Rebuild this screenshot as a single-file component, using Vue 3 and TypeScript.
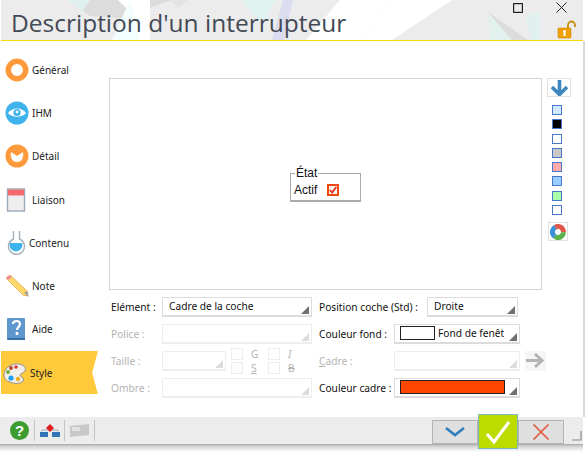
<script setup lang="ts">
interface Nav { label: string; icon: string; active?: boolean }
const nav: Nav[] = [
  { label: 'Général', icon: 'ring' },
  { label: 'IHM', icon: 'eye' },
  { label: 'Détail', icon: 'detail' },
  { label: 'Liaison', icon: 'cal' },
  { label: 'Contenu', icon: 'flask' },
  { label: 'Note', icon: 'pencil' },
  { label: 'Aide', icon: 'book' },
  { label: 'Style', icon: 'palette', active: true },
]
const swatches = ['#cfe8fc', '#000000', '#ffffff', '#c8c8c8', '#ffaaaa', '#99ccff', '#aaffaa', '#ffffff']
</script>

<template>
  <div class="win">
    <header class="head">
      <svg class="head-bg" width="586" height="40" viewBox="0 0 586 40">
        <polygon points="70,0 172,0 120,18 90,16" fill="#dcdcdc" />
        <polygon points="68,0 90,0 82,12" fill="#dff0ee" />
        <polygon points="118,0 150,0 150,40 112,40 130,12" fill="#ffffff" />
        <polygon points="130,0 140,40 112,40" fill="#f4fdfd" />
        <polygon points="170,0 188,0 178,8" fill="#e3e3e3" />
        <polygon points="242,0 276,0 262,26" fill="#dff2f0" />
        <polygon points="283,0 293,0 284,40 272,40" fill="#dcdcf0" />
        <polygon points="340,0 392,0 360,40 306,40" fill="#ffffff" />
        <polygon points="392,0 452,0 392,40 360,40" fill="#ffffff" />
        <polygon points="488,12 528,40 494,40" fill="#dcdcdc" />
        <polygon points="488,12 512,40 490,40" fill="#e2f0ee" />
        <polygon points="525,16 540,10 540,40 532,40" fill="#e0f0ef" />
      </svg>
      <h1 class="title">Description d'un interrupteur</h1>
      <div class="win-btns">
        <span class="max"></span>
        <svg width="11" height="11" viewBox="0 0 11 11"><path d="M.5.5l10 10M10.500.5l-10 10" stroke="#222" stroke-width="1" fill="none" /></svg>
      </div>
      <svg class="lock" width="20" height="19" viewBox="0 0 20 19">
        <path d="M11 9V5a3.500 3.500 0 0 1 7 0v2" fill="none" stroke="#c98f10" stroke-width="1.800" />
        <rect x="1" y="8" width="13" height="10" rx="1" fill="#f0a000" stroke="#c98a00" stroke-width=".6" />
        <path d="M7.500 10a1.500 1.500 0 0 1 1 2.600V16h-2v-3.400a1.500 1.500 0 0 1 1-2.600z" fill="#fff" />
      </svg>
    </header>

    <div class="body">
      <nav class="nav">
        <div v-for="n in nav" :key="n.label" class="nav-item" :class="{ active: n.active, contenu: n.icon === 'flask' }">
          <svg class="nav-icon" width="24" height="24" viewBox="0 0 24 24">
            <template v-if="n.icon === 'ring'">
              <circle cx="12" cy="12" r="8.700" fill="#fff" stroke="#ff9a3c" stroke-width="5.500" />
            </template>
            <template v-else-if="n.icon === 'eye'">
              <circle cx="12" cy="12" r="11.500" fill="#3fb4ec" />
              <path d="M3 12c4-6 14-6 18 0-4 5-14 5-18 0z" fill="#fff" />
              <circle cx="12" cy="11.500" r="3.600" fill="#3fb4ec" />
              <circle cx="12" cy="11" r="1.400" fill="#fff" />
            </template>
            <template v-else-if="n.icon === 'detail'">
              <circle cx="12" cy="12" r="11.500" fill="#ff9a3c" />
              <path d="M6 8l6 4 6-4c1 5-1 10-6 10S5 13 6 8z" fill="#fff" />
            </template>
            <template v-else-if="n.icon === 'cal'">
              <rect x="2.500" y="1" width="17" height="22" fill="#eeeeee" stroke="#9aa9b8" stroke-width="1.400" />
              <rect x="3" y="1.500" width="16" height="6" fill="#f36b6b" />
            </template>
            <template v-else-if="n.icon === 'flask'">
              <path d="M8.500 0v8a8 8 0 1 0 6 0V0" fill="#fff" stroke="#a8b0b8" stroke-width="1.400" />
              <path d="M4.800 12h12.400a6.500 6.500 0 1 1-12.400 0z" fill="#3fb4ec" />
            </template>
            <template v-else-if="n.icon === 'pencil'">
              <path d="M5 1l18 17-1 4-4-1L1 4z" fill="#ffd76a" stroke="#e8a838" stroke-width=".8" />
              <path d="M1 4l4-3 2 2-4 3z" fill="#ee8f9c" />
              <path d="M19 19l3-2 2 6z" fill="#a0a0a0" />
            </template>
            <template v-else-if="n.icon === 'book'">
              <rect x="2" y="1" width="18" height="22" rx="1" fill="#5f97cf" />
              <path d="M2 21h18v2H3z" fill="#3b6fa8" />
              <path d="M8 7c0-4 7-4 7 0 0 3-3 3-3 6" fill="none" stroke="#fff" stroke-width="2.200" />
              <rect x="10.700" y="15" width="2.600" height="3" fill="#fff" />
            </template>
            <template v-else>
              <path d="M1 14C1 6 10 2 16 3c6 1 8 5 5 8-2 2-3 1-4 3 1 3 5 3 3 6-2 3-9 3-13 1-4-1-6-4-6-7z" fill="#f1efe8" stroke="#8a8a8a" stroke-width=".9" />
              <circle cx="8" cy="7" r="2" fill="#b9502f" />
              <circle cx="5" cy="11" r="2" fill="#6fb04a" />
              <circle cx="13" cy="6" r="1.800" fill="#d33" />
              <circle cx="8" cy="17" r="2.600" fill="#1f9fef" />
              <circle cx="15" cy="18" r="2.200" fill="#f0b020" />
            </template>
          </svg>
          <span class="nav-label">{{ n.label }}</span>
        </div>
      </nav>

      <main class="content">
        <section class="top">
          <div class="preview">
            <fieldset class="etat">
              <legend>État</legend>
              <label class="actif">Actif <span class="check"><svg width="8" height="8" viewBox="0 0 8 8"><path d="M.8 4l2.300 2.500L7.300 1" fill="none" stroke="#e0301e" stroke-width="1.800" /></svg></span></label>
            </fieldset>
          </div>
          <aside class="tools">
            <button class="arrow-btn">
              <svg width="19" height="17" viewBox="0 0 19 17"><path d="M9.500 1v13M2 8l7.500 7.500L17 8" fill="none" stroke="#3e86bf" stroke-width="3.600" /></svg>
            </button>
            <div class="swatches">
              <span v-for="(c, i) in swatches" :key="i" class="swatch" :style="{ background: c }"></span>
            </div>
            <button class="wheel-btn">
              <svg width="16" height="16" viewBox="0 0 16 16">
                <g transform="rotate(-120 8 8)">
                  <circle cx="8" cy="8" r="5.500" fill="none" stroke="#e2574c" stroke-width="5" stroke-dasharray="11.520 23.040" />
                  <circle cx="8" cy="8" r="5.500" fill="none" stroke="#59b34a" stroke-width="5" stroke-dasharray="11.520 23.040" stroke-dashoffset="-11.520" />
                  <circle cx="8" cy="8" r="5.500" fill="none" stroke="#3a8fd8" stroke-width="5" stroke-dasharray="11.520 23.040" stroke-dashoffset="-23.040" />
                </g>
                <circle cx="8" cy="8" r="2.400" fill="#fff" />
              </svg>
            </button>
          </aside>
        </section>

        <section class="form">
          <div class="col-l">
            <div class="row"><span class="lab l1">Elément :</span><div class="sel"><span>Cadre de la coche</span><i class="tri"></i></div></div>
            <div class="row dis"><span class="lab l1">Police :</span><div class="sel"><i class="tri"></i></div></div>
            <div class="row dis">
              <span class="lab l1">Taille :</span>
              <div class="sel small"><i class="tri"></i></div>
              <div class="styles">
                <span class="cb"></span><span class="st">G</span><span class="cb"></span><span class="st it">I</span>
                <span class="cb"></span><span class="st un">S</span><span class="cb"></span><span class="st strike">B</span>
              </div>
            </div>
            <div class="row dis"><span class="lab l1">Ombre :</span><div class="sel"><i class="tri"></i></div></div>
          </div>
          <div class="col-r">
            <div class="row"><span class="lab l3">Position coche (Std) :</span><div class="sel pos"><span>Droite</span><i class="tri"></i></div></div>
            <div class="row"><span class="lab l2">Couleur fond :</span><div class="sel col"><span class="chip white"></span><span class="fond">Fond de fenêtre</span><i class="tri"></i></div></div>
            <div class="row dis"><span class="lab l2"><u>C</u>adre :</span><div class="sel col"><i class="tri"></i></div>
              <span class="go"><svg width="21" height="17" viewBox="0 0 21 17"><path d="M1 8.500h16M10 2l7 6.500-7 6.500" fill="none" stroke="#b4b4b4" stroke-width="3" /></svg></span>
            </div>
            <div class="row"><span class="lab l2">Couleur cadre :</span><div class="sel col"><span class="chip red"></span><i class="tri"></i></div></div>
          </div>
        </section>
      </main>
      <div class="edge"></div>
    </div>

    <footer class="foot">
      <div class="foot-tools">
        <span class="ft">
          <svg width="19" height="19" viewBox="0 0 19 19"><circle cx="9.500" cy="9.500" r="9.500" fill="#3c9c30" /><text x="9.500" y="14.500" text-anchor="middle" class="q">?</text></svg>
        </span>
        <span class="ft">
          <svg width="20" height="14" viewBox="0 0 20 14"><path d="M2 7.500V6h16v1.500" fill="none" stroke="#9ab" stroke-width="1" /><rect x="0" y="8" width="8" height="5" fill="#2f74b5" /><rect x="12" y="8" width="8" height="5" fill="#2f74b5" /><path d="M10 0l4 4-4 4-4-4z" fill="#e02020" /></svg>
        </span>
        <span class="ft">
          <svg width="19" height="13" viewBox="0 0 19 13"><path d="M0 2l19-2v11l-19 2z" fill="#c8c8c8" /><path d="M2 3h8v4H2z" fill="#e2e2e2" /></svg>
        </span>
      </div>
      <div class="actions">
        <button class="act">
          <svg width="22" height="11" viewBox="0 0 22 11"><path d="M2 2l9 7 9-7" fill="none" stroke="#2f7fbe" stroke-width="2.600" /></svg>
        </button>
        <button class="ok">
          <svg width="26" height="24" viewBox="0 0 26 24"><path d="M2 14l7 8L24 2" fill="none" stroke="#fff" stroke-width="3" /></svg>
        </button>
        <button class="act">
          <svg width="18" height="18" viewBox="0 0 18 18"><path d="M1.500 1.500l15 15M16.500 1.500l-15 15" fill="none" stroke="#e2583e" stroke-width="1.600" /></svg>
        </button>
      </div>
      <svg class="grip" width="11" height="11" viewBox="0 0 11 11"><path d="M10 1v9H1" fill="none" stroke="#8a8a8a" stroke-width="1.200" /></svg>
    </footer>
    <div class="shadow"></div>
  </div>
</template>

<style>
html, body { margin: 0; background: #fff; }
</style>

<style scoped>
.win {
  width: 586px;
  height: 452px;
  display: flex;
  flex-direction: column;
  background: #fff;
  overflow: hidden;
  font-family: "Noto Sans", sans-serif;
  font-size: 10.200px;
  color: #111;
}
.head {
  position: relative;
  height: 40px;
  flex: none;
  margin: 0 3px 0 1px;
  background: #ececec;
  border-bottom: 1px solid #ffd800;
  overflow: hidden;
}
.head-bg { position: absolute; left: -1px; top: 0; }
.title {
  position: relative;
  margin: 0;
  padding: 6px 0 0 10px;
  font: 400 24.500px/34px "Open Sans", sans-serif;
  color: #444a55;
  white-space: nowrap;
}
.win-btns {
  position: absolute;
  top: 2px;
  right: 16px;
  display: flex;
  gap: 33px;
  align-items: center;
}
.max { width: 8px; height: 8px; border: 1px solid #222; box-shadow: inset 0 0 0 1px #bbb; }
.lock { position: absolute; top: 20px; right: 6px; }
.body { flex: none; height: 376px; display: flex; min-height: 0; position: relative; }
.nav { width: 99px; flex: none; padding: 7px 0 0 1px; box-sizing: border-box; }
.nav-item {
  height: 43.300px;
  display: flex;
  align-items: center;
  gap: 3px;
  padding-left: 4px;
  box-sizing: border-box;
}
.nav-label { font-size: 10px; color: #222; }
.nav-icon { flex: none; }
.contenu { gap: 0; }
.active {
  width: 97px;
  padding-left: 2px;
  background: #ffc93c;
  clip-path: polygon(0 0, 100% 0, 94% 50%, 100% 100%, 0 100%);
}
.content { width: 478px; flex: none; padding-top: 37px; box-sizing: border-box; }
.top { display: flex; margin-left: 10px; gap: 5px; align-items: flex-start; }
.preview {
  width: 433px;
  height: 212px;
  flex: none;
  box-sizing: border-box;
  border: 1px solid #d4d4d4;
  display: flex;
  justify-content: center;
  padding: 88px 0 0 0;
}
.etat {
  width: 71px;
  height: 35px;
  box-sizing: border-box;
  margin: 0;
  padding: 0 0 0 3px;
  border: 1px solid #aaa;
  border-bottom-width: 2px;
  font: 12px "Liberation Sans", sans-serif;
  color: #111;
}
.etat legend { padding: 0 1px 0 1px; margin-left: 1px; line-height: 13px; }
.actif { display: flex; align-items: center; gap: 10px; line-height: 16px; margin-top: 2px; }
.check {
  width: 12px;
  height: 12px;
  box-sizing: border-box;
  border: 2px solid #f04a10;
  background: #fff3ef;
  display: flex;
  align-items: center;
  justify-content: center;
}
.check svg { width: 8px; height: 8px; flex: none; }
.tools { width: 24px; flex: none; display: flex; flex-direction: column; align-items: flex-start; }
.arrow-btn {
  width: 24px;
  height: 19px;
  padding: 0;
  border: 1px solid #e2e2e2;
  background: #fff;
  display: flex;
  align-items: center;
  justify-content: center;
}
.swatches { display: flex; flex-direction: column; gap: 4.300px; margin: 8px 0 0 5px; }
.swatch {
  width: 10px;
  height: 10px;
  box-sizing: border-box;
  display: block;
  border: 1px solid #4a78c8;
}
.wheel-btn {
  margin: 7px 0 0 1px;
  width: 20px;
  height: 19px;
  padding: 0;
  border: 1px solid #e2e2e2;
  background: #fff;
  display: flex;
  align-items: center;
  justify-content: center;
}
.form { display: flex; margin: 3px 0 0 12px; }
.col-l { width: 208px; flex: none; }
.col-r { width: 258px; flex: none; }
.row { display: flex; align-items: center; height: 27px; position: relative; }
.lab { flex: none; color: #111; white-space: nowrap; }
.l1 { width: 51px; }
.l2 { width: 75px; }
.l3 { width: 108px; }
.sel {
  position: relative;
  width: 150px;
  height: 20px;
  box-sizing: border-box;
  border: 1px solid #dcdcdc;
  border-width: 1px 1px 2px 1px;
  display: flex;
  align-items: center;
  padding-left: 6px;
  white-space: nowrap;
  overflow: hidden;
}
.sel.small { width: 64px; }
.sel.pos { width: 91px; }
.sel.col { width: 126px; padding-left: 5px; }
.tri {
  position: absolute;
  right: 2px;
  bottom: 1px;
  width: 0;
  height: 0;
  border-style: solid;
  border-width: 0 0 8px 8px;
  border-color: transparent transparent #707070 transparent;
}
.chip { display: block; flex: none; box-sizing: border-box; height: 14px; border: 1px solid #222; }
.chip.white { width: 35px; background: #fff; }
.chip.red { width: 105px; background: #ff4500; }
.fond { margin-left: 3px; width: 66px; overflow: hidden; }
.dis .lab, .dis .st { color: #b4b4b4; }
.dis .sel { border-color: #eeeeee; }
.dis .tri { border-color: transparent transparent #dcdcdc transparent; }
.styles {
  display: grid;
  grid-template-columns: 12px 25px 12px 14px;
  grid-auto-rows: 12px;
  gap: 2px 0;
  margin-left: 5px;
  align-items: center;
}
.cb { width: 10px; height: 10px; border: 1px solid #eee; }
.st { padding-left: 8px; }
.it { font-style: italic; }
.un { text-decoration: underline; }
.strike { text-decoration: line-through; }
.go {
  margin-left: 5px;
  width: 21px;
  height: 20px;
  display: flex;
  align-items: center;
  background: #f6f6f6;
}
.edge {
  position: absolute;
  right: 1px;
  top: 0;
  bottom: 0;
  width: 2px;
  background: #d8d8d8;
}
.foot {
  height: 27px;
  flex: none;
  background: #ececec;
  display: flex;
  align-items: center;
  position: relative;
  margin-right: 3px;
}
.foot-tools { display: flex; height: 100%; padding-left: 5px; }
.ft {
  width: 30px;
  height: 21px;
  margin-top: 3px;
  display: flex;
  align-items: center;
  justify-content: center;
  border-right: 1px solid #c4c4c4;
  box-sizing: border-box;
}
.ft:first-child { justify-content: flex-start; padding-left: 5px; }
.q { font: bold 15px "Liberation Sans", sans-serif; fill: #fff; }
.actions {
  position: absolute;
  left: 432px;
  top: -3px;
  display: flex;
  align-items: center;
}
.act {
  width: 46px;
  height: 24px;
  padding: 0;
  background: #dfdfdf;
  border: 1px solid #b4b4b4;
  display: flex;
  align-items: center;
  justify-content: center;
}
.ok {
  width: 40px;
  height: 35px;
  padding: 0;
  background: #bcdc00;
  border: 1px solid #7cb6c4;
  display: flex;
  align-items: center;
  justify-content: center;
}
.grip { position: absolute; left: 571px; top: 13px; }
.shadow {
  flex: none;
  height: 8px;
  margin-right: 3px;
  background: linear-gradient(#a8a8a8, #d4d4d4 30%, #ffffff);
}
</style>
